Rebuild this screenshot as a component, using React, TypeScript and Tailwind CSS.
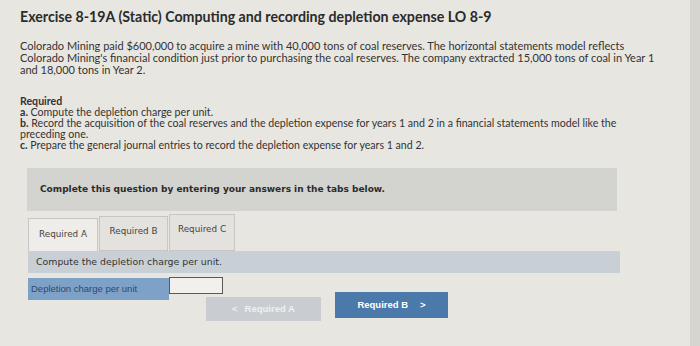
import React from 'react';

export default function App() {
  return (
    <div className="w-[700px] h-[346px] bg-[#e8e6e1] flex overflow-hidden" style={{ fontFamily: 'Lato, "Liberation Sans", sans-serif' }}>
      <div className="flex-1 pl-[20px] pt-[9px]">
        <h1 className="text-[14.2px] leading-[16px] font-bold text-[#2b2b2b]">
          Exercise 8-19A (Static) Computing and recording depletion expense LO 8-9
        </h1>

        <p className="mt-[15px] text-[11px] leading-[12px] text-[#333]">
          Colorado Mining paid $600,000 to acquire a mine with 40,000 tons of coal reserves. The horizontal statements model reflects
          <br />
          Colorado Mining's financial condition just prior to purchasing the coal reserves. The company extracted 15,000 tons of coal in Year 1
          <br />
          and 18,000 tons in Year 2.
        </p>

        <div className="mt-[20px] text-[10.6px] leading-[11px] text-[#333]">
          <div className="font-bold">Required</div>
          <div><span className="font-bold">a.</span> Compute the depletion charge per unit.</div>
          <div><span className="font-bold">b.</span> Record the acquisition of the coal reserves and the depletion expense for years 1 and 2 in a financial statements model like the</div>
          <div>preceding one.</div>
          <div><span className="font-bold">c.</span> Prepare the general journal entries to record the depletion expense for years 1 and 2.</div>
        </div>

        <div className="mt-[17px] ml-[7px] w-[590px] h-[43px] bg-[#d3d3d0] flex items-center pl-[13px]">
          <span className="text-[9px] font-bold text-[#2b2b2b]" style={{ fontFamily: '"DejaVu Sans", sans-serif' }}>
            Complete this question by entering your answers in the tabs below.
          </span>
        </div>

        <div className="ml-[8px] mt-[3px]" style={{ fontFamily: '"DejaVu Sans", sans-serif' }}>
          <div className="flex items-end gap-[1px] h-[37px]">
            <div className="w-[70px] h-[33px] bg-[#eeede9] border border-[#c6c6c3] border-b-0 flex items-center justify-center text-[8.8px] text-[#444]">
              Required A
            </div>
            <div className="w-[69px] h-[35px] bg-[#e3e2de] border border-[#c6c6c3] flex items-center justify-center pb-[3px] text-[8.8px] text-[#444]">
              Required B
            </div>
            <div className="w-[66px] h-[37px] bg-[#e3e2de] border border-[#c6c6c3] flex items-center justify-center pb-[6px] text-[8.8px] text-[#444]">
              Required C
            </div>
          </div>
          <div className="w-[592px] h-[22px] bg-[#c9d0d5] flex items-center pl-[8px]">
            <span className="text-[9.4px] text-[#333]">Compute the depletion charge per unit.</span>
          </div>

          <div className="mt-[5px] flex items-start">
            <div className="w-[141px] h-[22px] bg-[#7ea1c8] flex items-center pl-[3px]">
              <span className="text-[9.5px] text-[#2c4a70]" style={{ fontFamily: '"Liberation Sans", sans-serif' }}>
                Depletion charge per unit
              </span>
            </div>
            <div className="mt-[-1px] w-[54px] h-[17px] bg-[#f1f0ec] border border-[#5a5a5a]" />
          </div>

          <div className="mt-[-8px] ml-[178px] flex items-start gap-[14px]" style={{ fontFamily: '"Liberation Sans", sans-serif' }}>
            <div className="mt-[5px] w-[115px] h-[24px] bg-[#c9cdd1] flex items-center justify-center text-[9.5px] font-bold text-[#eef0f2]">
              <span className="mr-[7px]">&lt;</span>Required A
            </div>
            <div className="w-[113px] h-[26px] bg-[#4b79a9] flex items-center justify-center text-[9.5px] font-bold text-white">
              Required B<span className="ml-[12px]">&gt;</span>
            </div>
          </div>
        </div>
      </div>
      <div className="w-[10px] h-full bg-[#d7d5d0]" />
    </div>
  );
}
